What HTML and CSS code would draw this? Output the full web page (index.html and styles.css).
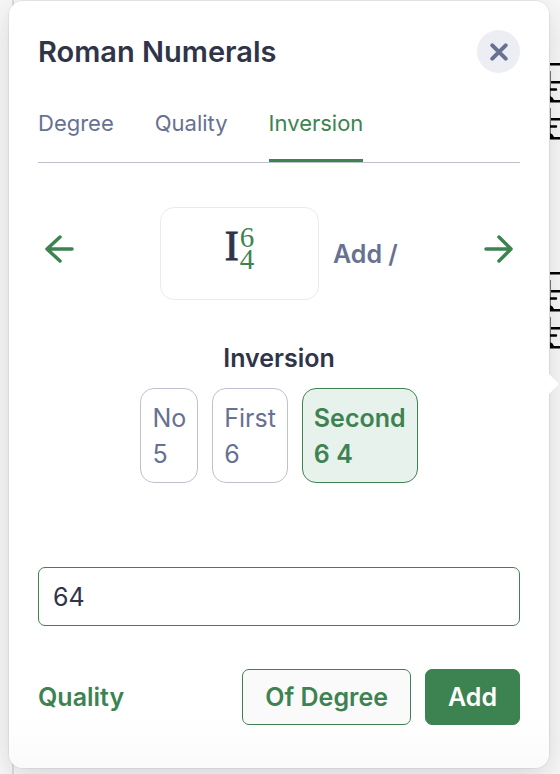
FILE: index.html
```html
<!DOCTYPE html>
<html lang="en">
  <head>
    <meta charset="UTF-8" />
    <meta name="viewport" content="width=device-width, initial-scale=1.0" />
    <title>Roman Numerals</title>
    <link rel="stylesheet" href="styles.css">
  </head>
  <body>
    <!-- score behind the popover -->
    <svg class="score" width="10" height="300" viewBox="0 0 10 300" aria-hidden="true">
      <defs>
        <g id="notes">
          <path d="M0 1.2h10M0 19.2h10M0 38.2h10M0 56.2h10M0 75.2h10" stroke="#000" stroke-width="2.4" />
          <path d="M.5 8v28M.5 45v28" stroke="#777" />
          <path d="M0 26.5h6M0 63.5h6" stroke="#000" stroke-width="2.4" stroke-linecap="round" />
          <path d="M0 33q3 1 4 4H0zM0 70q3 1 4 4H0z" />
        </g>
      </defs>
      <use href="#notes" y="0" />
      <use href="#notes" y="209" />
    </svg>

    <main class="popover">
      <header class="header">
        <h1>Roman Numerals</h1>
        <button class="close" aria-label="Close">
          <svg width="18" height="18" viewBox="0 0 18 18">
            <path d="M2.3 2.3l13.4 13.4M15.7 2.3L2.3 15.7" stroke-width="4" />
          </svg>
        </button>
      </header>

      <nav class="tabs">
        <a href="#degree">Degree</a>
        <a href="#quality">Quality</a>
        <a href="#inversion" class="active">Inversion</a>
      </nav>

      <section class="preview">
        <button class="arrow" aria-label="Previous">
          <svg width="30" height="28" viewBox="0 0 30 28">
            <path d="M28 14H3M16 2L3 14l13 12" stroke-width="3.5" />
          </svg>
        </button>
        <div class="numeral">
          <span class="root">I</span>
          <span class="figures"><span>6</span><span>4</span></span>
        </div>
        <button class="add-slash">Add /</button>
        <button class="arrow next" aria-label="Next">
          <svg width="30" height="28" viewBox="0 0 30 28">
            <path d="M3 14h25M16 2l12 12-12 12" stroke-width="3.5" />
          </svg>
        </button>
      </section>

      <h2>Inversion</h2>
      <div class="options">
        <button class="option">No<br>5</button>
        <button class="option">First<br>6</button>
        <button class="option selected">Second<br>6 4</button>
      </div>

      <input type="text" class="entry" value="64" aria-label="Inversion figures" />

      <footer class="footer">
        <a href="#quality" class="back">Quality</a>
        <button class="btn">Of Degree</button>
        <button class="btn primary">Add</button>
      </footer>
    </main>
  </body>
</html>
```
FILE: styles.css
```css
* {
  box-sizing: border-box;
}

body {
  font-family: Inter, "Liberation Sans", sans-serif;
  font-size: 25px;
  line-height: 36px;
  color: #2f3449;
  margin: 0;
  padding: 1px 11px 6px 9px;
  background-color: #f8f8f8;
  position: relative;
  overflow-x: hidden;
}

/* page edge of the score */
body::before {
  content: "";
  position: absolute;
  top: 0;
  bottom: 0;
  left: 12px;
  width: 2px;
  background-color: #dcdce0;
}

.score {
  position: absolute;
  top: 63px;
  right: 0;
}

button {
  font: inherit;
  color: inherit;
  background: none;
  border: none;
  padding: 0;
  cursor: pointer;
}

button svg {
  display: block;
  fill: none;
  stroke: currentColor;
  stroke-linecap: round;
  stroke-linejoin: round;
}

a {
  color: inherit;
  text-decoration: none;
}

.popover {
  position: relative;
  padding: 29px 29px 43px;
  border-radius: 14px;
  background: linear-gradient(to top, #fafafa, #fff 48px);
  box-shadow: 0 0 1px 1px rgba(0, 0, 0, 0.06), 0 8px 30px rgba(40, 40, 55, 0.16);
}

/* pointer towards the selected note */
.popover::after {
  content: "";
  position: absolute;
  left: 100%;
  top: 373px;
  border: 10px solid transparent;
  border-left-color: #fff;
  border-right: none;
}

.header {
  display: flex;
  align-items: center;
  justify-content: space-between;
}

h1 {
  font-size: 29px;
  font-weight: 600;
  margin: 0;
}

.close {
  display: flex;
  align-items: center;
  justify-content: center;
  width: 43px;
  height: 43px;
  border-radius: 50%;
  color: #677191;
  background-color: #edeef3;
}

.tabs {
  display: flex;
  gap: 41px;
  margin-top: 32px;
  border-bottom: 1px solid #bfc1d0;
  font-size: 22px;
  color: #677191;
}

.tabs a {
  height: 57px;
  border-bottom: 3px solid transparent;
}

.tabs .active {
  color: #3d8351;
  border-color: #3d8351;
}

.preview {
  display: flex;
  align-items: center;
  margin-top: 44px;
}

.arrow {
  width: 43px;
  padding: 0 6px 10px;
  color: #3d8351;
}

.next {
  margin-left: auto;
}

.numeral {
  display: flex;
  justify-content: center;
  gap: 1px;
  width: 159px;
  height: 93px;
  margin-left: 79px;
  padding-top: 18px;
  border: 1px solid #ebebee;
  border-radius: 14px;
  font-family: "Liberation Serif", serif;
}

.root {
  font-size: 42px;
  line-height: 40px;
  -webkit-text-stroke: 1px;
}

.figures {
  display: flex;
  flex-direction: column;
  font-size: 29px;
  line-height: 22px;
  color: #3d8351;
}

.add-slash {
  margin-left: 14px;
  font-weight: 600;
  color: #677191;
}

h2 {
  font-size: 25px;
  font-weight: 600;
  text-align: center;
  margin: 40px 0 12px;
}

.options {
  display: flex;
  justify-content: center;
  gap: 14px;
}

.option {
  padding: 11px;
  height: 95px;
  border: 1px solid #bfc1d0;
  border-radius: 14px;
  text-align: left;
  color: #677191;
}

.selected {
  font-weight: 600;
  color: #3d8351;
  border-color: #3d8351;
  background-color: #e8f2ec;
}

.entry {
  display: block;
  width: 100%;
  height: 59px;
  margin: 84px 0 43px;
  padding: 0 14px;
  border: 1px solid #3d8351;
  border-radius: 7px;
  font: inherit;
  color: inherit;
  background-color: #fff;
}

.footer {
  display: flex;
  align-items: center;
  gap: 14px;
  font-weight: 600;
  color: #3d8351;
}

.back {
  margin-right: auto;
}

.btn {
  height: 56px;
  padding: 0 22px;
  border: 1px solid #3d8351;
  border-radius: 7px;
  background-color: #fafafa;
}

.primary {
  color: #fff;
  background-color: #3d8351;
}
```
